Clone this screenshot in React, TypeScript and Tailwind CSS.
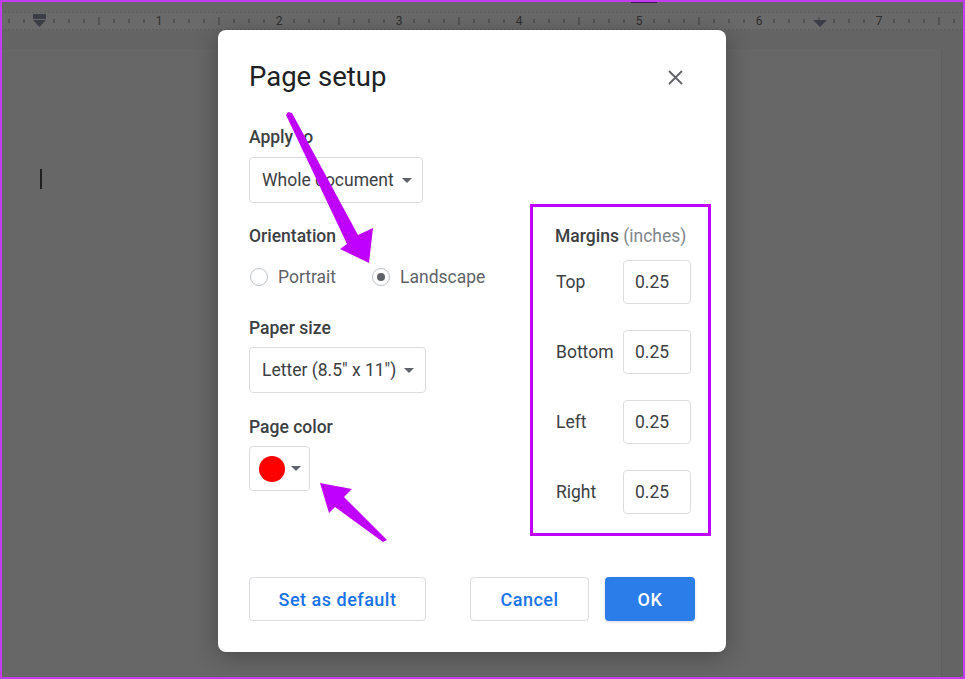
import React from "react";

const font = { fontFamily: "Roboto, 'Liberation Sans', sans-serif" };

function Caret() {
  return (
    <svg width="10" height="5" viewBox="0 0 10 5" className="shrink-0">
      <path d="M0 0 L10 0 L5 5 Z" fill="#5f6368" />
    </svg>
  );
}

function Ruler() {
  const ticks: React.ReactNode[] = [];
  for (let i = -2; i <= 64; i++) {
    const x = 39 + i * 15;
    if (x < 0 || x > 960) continue;
    if (i % 8 === 0) continue; // number goes here
    const long = i % 4 === 0;
    ticks.push(
      <line
        key={i}
        x1={x}
        x2={x}
        y1={long ? 5 : 7}
        y2={long ? 13 : 11}
        stroke="#3f3f3f"
        strokeWidth="1"
      />
    );
  }
  return (
    <svg width="965" height="18" className="block">
      <rect x="0" y="0" width="965" height="18" fill="#6a6a6a" />
      <rect x="820" y="0" width="145" height="18" fill="#686868" />
      <line x1="0" x2="965" y1="0.5" y2="0.5" stroke="#5c5c5c" strokeDasharray="2 2" />
      <line x1="0" x2="965" y1="17.5" y2="17.5" stroke="#5c5c5c" strokeDasharray="2 2" />
      {ticks}
      {[1, 2, 3, 4, 5, 6, 7].map((n) => (
        <text
          key={n}
          x={39 + n * 120}
          y="13"
          fontSize="12"
          textAnchor="middle"
          fill="#2e2e2e"
          style={font}
        >
          {n}
        </text>
      ))}
      <rect x="33" y="2" width="13" height="5" fill="#3b3e46" />
      <path d="M33 8 L46 8 L39.5 15 Z" fill="#3b3e46" />
      <path d="M813 8 L827 8 L820 15 Z" fill="#3b3e46" />
    </svg>
  );
}

function Label({ children, className = "" }: { children: React.ReactNode; className?: string }) {
  return (
    <div className={`text-[17.5px] leading-6 font-medium text-[#3c4043] ${className}`}>{children}</div>
  );
}

function Radio({ checked, label }: { checked?: boolean; label: string }) {
  return (
    <div className="flex items-center gap-[10px]">
      <span className="w-[18px] h-[18px] rounded-full border border-[#bdc1c6] flex items-center justify-center">
        {checked && <span className="w-[8px] h-[8px] rounded-full bg-[#5f6368]" />}
      </span>
      <span className="text-[17.5px] leading-6 text-[#5f6368]">{label}</span>
    </div>
  );
}

function MarginRow({ label }: { label: string }) {
  return (
    <div className="flex items-center h-[44px]">
      <span className="w-[68px] pl-[1px] text-[17.5px] text-[#3c4043]">{label}</span>
      <div className="w-[68px] h-[44px] border border-[#dadce0] rounded flex items-center pl-[11px] text-[17.5px] text-[#3c4043]">
        0.25
      </div>
    </div>
  );
}

export default function App() {
  return (
    <div className="relative w-[965px] h-[679px] overflow-hidden bg-[#666666]" style={font}>
      {/* document behind the overlay */}
      <div className="h-[12px] bg-[#666666] flex">
        <div className="ml-[631px] w-[26px] h-[3px] bg-[#3f1a4d]" />
      </div>
      <Ruler />
      <div className="h-[19px] bg-[#646464]" />
      <div className="flex h-[630px]">
        <div className="w-[942px] bg-[#676767] border-r border-[#5f5f5f] pt-[120px] pl-[40px]">
          <div className="w-[2px] h-[20px] bg-[#1f1f1f]" />
        </div>
        <div className="flex-1 bg-[#646464]" />
      </div>

      {/* dialog */}
      <div className="absolute left-[218px] top-[30px] w-[508px] h-[622px] rounded-lg bg-white shadow-[0_4px_24px_rgba(0,0,0,0.3)] px-[31px] pt-[31px] flex flex-col">
        <div className="flex items-center justify-between h-[32px]">
          <div className="text-[27.5px] leading-8 text-[#202124]">Page setup</div>
          <svg width="15" height="15" viewBox="0 0 15 15" className="mr-[12px]">
            <path d="M1 1 L14 14 M14 1 L1 14" stroke="#5f6368" strokeWidth="1.8" />
          </svg>
        </div>

        <div className="flex mt-[32px]">
          <div className="w-[281px] shrink-0 flex flex-col">
            <Label>Apply to</Label>
            <div className="mt-[8px] w-[174px] h-[46px] border border-[#dadce0] rounded flex items-center justify-between pl-[12px] pr-[10px]">
              <span className="text-[17.5px] text-[#3c4043]">Whole document</span>
              <Caret />
            </div>
            <Label className="mt-[21px]">Orientation</Label>
            <div className="mt-[17px] flex items-center gap-[36px] pl-[1px]">
              <Radio label="Portrait" />
              <Radio label="Landscape" checked />
            </div>
            <Label className="mt-[27px]">Paper size</Label>
            <div className="mt-[7px] w-[177px] h-[46px] border border-[#dadce0] rounded flex items-center justify-between pl-[12px] pr-[11px]">
              <span className="text-[17.5px] text-[#3c4043]">Letter (8.5" x 11")</span>
              <Caret />
            </div>
            <Label className="mt-[22px]">Page color</Label>
            <div className="mt-[7px] w-[61px] h-[45px] border border-[#dadce0] rounded flex items-center pl-[9px] gap-[6px]">
              <span className="w-[26px] h-[26px] rounded-full bg-[#ff0000]" />
              <Caret />
            </div>
          </div>

          <div className="mt-[79px] w-[181px] h-[332px] shrink-0 border-[3px] border-[#c000ff] pl-[22px] pt-[17px] flex flex-col">
            <div className="text-[17.5px] leading-6 whitespace-nowrap">
              <span className="font-medium text-[#3c4043]">Margins</span>{" "}
              <span className="text-[#80868b]">(inches)</span>
            </div>
            <div className="mt-[12px] flex flex-col gap-[26px]">
              <MarginRow label="Top" />
              <MarginRow label="Bottom" />
              <MarginRow label="Left" />
              <MarginRow label="Right" />
            </div>
          </div>
        </div>

        <div className="mt-auto mb-[31px] flex items-center h-[44px]">
          <div className="w-[177px] h-[44px] border border-[#dadce0] rounded flex items-center justify-center text-[18px] font-medium text-[#1a73e8] tracking-[0.5px]">
            Set as default
          </div>
          <div className="ml-auto w-[119px] h-[44px] border border-[#dadce0] rounded flex items-center justify-center text-[18px] font-medium text-[#1a73e8] tracking-[0.5px]">
            Cancel
          </div>
          <div className="ml-[16px] w-[90px] h-[44px] rounded bg-[#2b7de9] flex items-center justify-center text-[18px] font-medium text-white tracking-[0.5px] shadow-[0_1px_3px_rgba(60,64,67,0.2)]">
            OK
          </div>
        </div>
      </div>

      {/* annotation arrows */}
      <svg className="absolute inset-0 pointer-events-none" width="965" height="679">
        <polygon
          points="288,112 292,113 358,235 373,228 369,263 340,249 347,244 286,115"
          fill="#c000ff"
        />
        <polygon
          points="320,483 352,489 344,497 387,540 383,542 335,507 329,513"
          fill="#c000ff"
        />
      </svg>

      {/* screenshot frame */}
      <div className="absolute inset-0 border-2 border-[#c33cf0] pointer-events-none" />
    </div>
  );
}
